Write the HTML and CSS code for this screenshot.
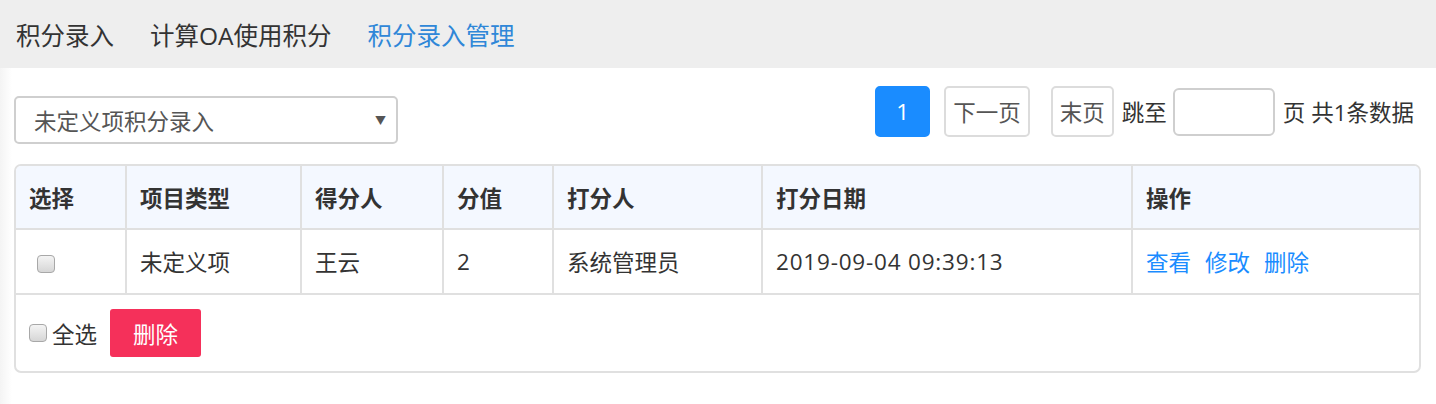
FILE: index.html
```html
<!DOCTYPE html>
<html lang="zh-CN">
<head>
    <meta charset="UTF-8">
    <meta name="viewport" content="width=device-width, initial-scale=1.0">
    <title>积分录入管理</title>
    <link rel="stylesheet" href="styles.css">
</head>
<body>
    <div class="tabs">
        <a class="tab">积分录入</a>
        <a class="tab">计算OA使用积分</a>
        <a class="tab active">积分录入管理</a>
    </div>

    <div class="main">
        <div class="toolbar">
            <div class="select">
                <span>未定义项积分录入</span>
                <span class="arrow">▼</span>
            </div>
            <div class="pager">
                <span class="page current">1</span>
                <span class="page">下一页</span>
                <span class="page last">末页</span>
                <span class="label">跳至</span>
                <input class="jump" type="text">
                <span class="label">页 共1条数据</span>
            </div>
        </div>

        <div class="grid-box">
            <table class="grid">
                <thead>
                    <tr>
                        <th class="c-sel">选择</th>
                        <th class="c-type">项目类型</th>
                        <th class="c-who">得分人</th>
                        <th class="c-val">分值</th>
                        <th class="c-by">打分人</th>
                        <th class="c-date">打分日期</th>
                        <th>操作</th>
                    </tr>
                </thead>
                <tbody>
                    <tr>
                        <td><input class="chk" type="checkbox"></td>
                        <td>未定义项</td>
                        <td>王云</td>
                        <td>2</td>
                        <td>系统管理员</td>
                        <td class="date">2019-09-04 09:39:13</td>
                        <td class="ops"><a>查看</a><a>修改</a><a>删除</a></td>
                    </tr>
                </tbody>
            </table>
            <div class="grid-foot">
                <label class="all"><input class="chk" type="checkbox">全选</label>
                <button class="btn-del">删除</button>
            </div>
        </div>
    </div>
</body>
</html>
```

FILE: styles.css
```css
*{
    box-sizing: border-box;
    font-family: "Open Sans", "Noto Sans CJK SC", sans-serif;
}

body{
    margin: 0;
    background: linear-gradient(to right, #f4f4f4, #fff 12px);
    color: #333;
}

.tabs{
    display: flex;
    align-items: center;
    height: 68px;
    padding-left: 16px;
    background-color: #eeeeee;
}
.tab{
    font-size: 24.5px;
    color: #333;
    margin-right: 36px;
}
.tab.active{
    color: #2f87d8;
}

.main{
    padding: 0 15px 0 14px;
}

.toolbar{
    display: flex;
    justify-content: space-between;
    align-items: flex-start;
    height: 96px;
    padding-top: 18px;
}

.select{
    display: flex;
    justify-content: space-between;
    align-items: center;
    width: 384px;
    height: 48px;
    margin-top: 10px;
    padding: 0 10px 0 18px;
    border: 2px solid #cfcfcf;
    border-radius: 5px;
    font-size: 22.5px;
    color: #555;
}
.select .arrow{
    font-size: 11px;
    color: #555;
}

.pager{
    display: flex;
    align-items: center;
    padding-right: 7px;
    font-size: 22.5px;
}
.page{
    display: flex;
    align-items: center;
    justify-content: center;
    height: 51px;
    padding: 0 7px;
    border: 2px solid #dcdcdc;
    border-radius: 5px;
    color: #555;
    margin-right: 14px;
}
.page.current{
    width: 55px;
    border-color: #1a8cff;
    background-color: #1a8cff;
    color: #fff;
}
.page.last{
    margin-left: 7px;
    margin-right: 8px;
}
.jump{
    width: 102px;
    height: 48px;
    margin: 0 8px 0 6px;
    border: 2px solid #cfcfcf;
    border-radius: 6px;
}

.grid-box{
    border: 2px solid #e0e0e0;
    border-radius: 7px;
    overflow: hidden;
}
.grid{
    width: 100%;
    border-collapse: collapse;
    font-size: 22.5px;
}
.grid th, .grid td{
    height: 63px;
    padding: 0 13px;
    text-align: left;
    border-left: 2px solid #e0e0e0;
    border-bottom: 2px solid #e0e0e0;
}
.grid td{
    height: 65px;
}
.grid th:first-child, .grid td:first-child{
    border-left: none;
}
.grid thead tr{
    background-color: #f4f8ff;
}
.grid th{
    font-weight: bold;
    color: #333;
}
.c-sel{ width: 110px; }
.c-type{ width: 175px; }
.c-who{ width: 142px; }
.c-val{ width: 110px; }
.c-by{ width: 209px; }
.c-date{ width: 370px; }

.grid td.date{
    letter-spacing: 0.8px;
}

.chk{
    appearance: none;
    width: 18px;
    height: 18px;
    margin: 0 0 0 8px;
    vertical-align: middle;
    border: 1px solid #a8a8a8;
    border-radius: 4px;
    background: linear-gradient(#f4f4f4, #d6d6d6);
}

.ops a{
    color: #1a8cff;
    margin-right: 14px;
}

.grid-foot{
    display: flex;
    align-items: center;
    height: 76px;
    padding-left: 13px;
}
.all{
    display: flex;
    align-items: center;
    font-size: 22.5px;
    margin-right: 13px;
}
.all .chk{
    margin: 0 5px 0 0;
}
.btn-del{
    width: 91px;
    height: 48px;
    border: none;
    border-radius: 3px;
    background-color: #f5305a;
    color: #fff;
    font-size: 22.5px;
}
```
